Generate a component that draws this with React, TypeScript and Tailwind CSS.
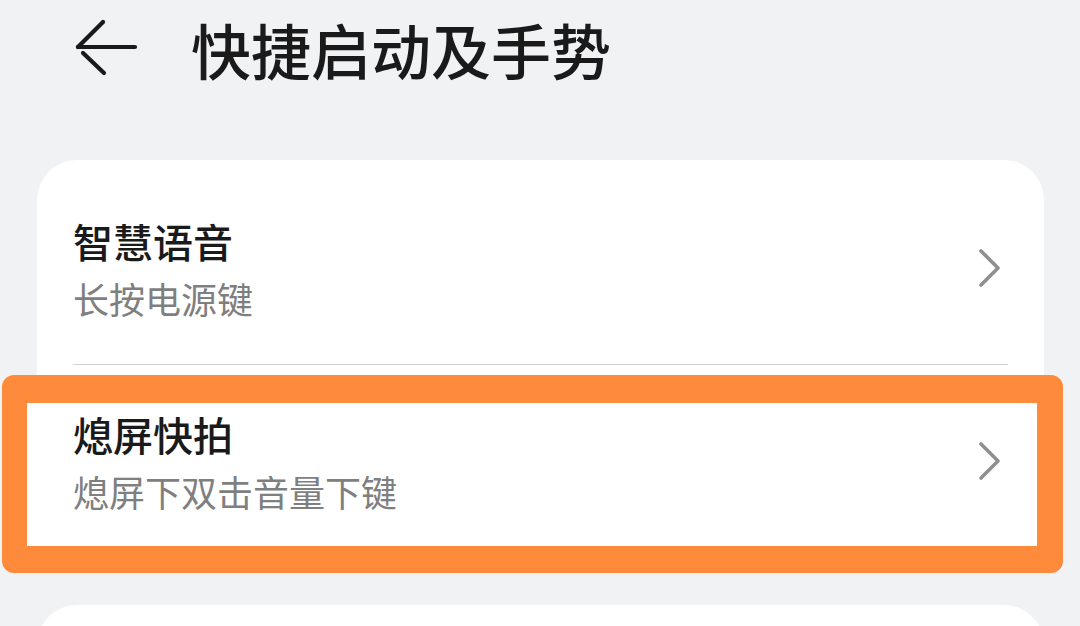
import React from "react";

const font = { fontFamily: '"Noto Sans CJK SC", "Noto Sans", sans-serif' };

function BackArrow() {
  return (
    <svg width="70" height="64" viewBox="0 0 70 64" className="text-[#1a1a1a]">
      <g fill="none" stroke="currentColor" strokeWidth="4.2" strokeLinecap="round">
        <path d="M10 30 H67" />
        <path d="M10 30 L35 5" />
        <path d="M15 36 L36 56" />
      </g>
    </svg>
  );
}

function Chevron() {
  return (
    <svg width="24" height="40" viewBox="0 0 24 40" className="text-[#8f8f8f]">
      <path d="M3 3 L20 20 L3 37" fill="none" stroke="currentColor" strokeWidth="3.6" strokeLinecap="round" strokeLinejoin="round" />
    </svg>
  );
}

function Row({ title, desc }: { title: string; desc: string }) {
  return (
    <div className="relative z-10 flex h-[192px] items-center justify-between pl-[36px] pr-[42px]">
      <div className="flex flex-col gap-[11px]">
        <div className="text-[40px] leading-[48px] font-medium text-[#1a1a1a]">{title}</div>
        <div className="text-[36px] leading-[44px] text-[#7f7f7f]">{desc}</div>
      </div>
      <Chevron />
    </div>
  );
}

export default function App() {
  return (
    <div className="relative h-[626px] w-[1080px] overflow-hidden bg-[#f1f2f4]" style={font}>
      <div className="flex h-[98px] items-center">
        <div className="ml-[68px] flex items-center">
          <BackArrow />
        </div>
        <div className="ml-[53px] text-[60px] leading-[70px] font-medium text-[#1a1a1a]">快捷启动及手势</div>
      </div>

      <div className="mt-[62px] ml-[37px] mr-[36px] rounded-[40px] bg-white pt-[12px]">
        <Row title="智慧语音" desc="长按电源键" />
        <div className="mx-[36px] h-px bg-[#d2d2d2]" />
        <Row title="熄屏快拍" desc="熄屏下双击音量下键" />
      </div>

      <div className="mt-[48px] ml-[37px] mr-[36px] h-[120px] rounded-[40px] bg-white" />

      <div className="absolute left-[2px] top-[375px] h-[198px] w-[1061px] rounded-[12px] border-solid border-[#fe8b3c] border-l-[25px] border-t-[28px] border-r-[26px] border-b-[27px] bg-white" />
    </div>
  );
}
